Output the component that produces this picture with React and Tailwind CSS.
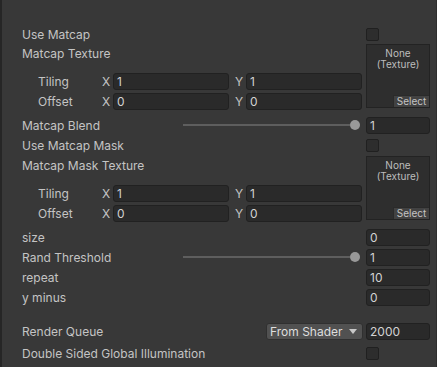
import React from "react";

const font = { fontFamily: "Inter, 'Noto Sans', 'Liberation Sans', sans-serif" };

function Field({ value, w = "w-[64px]" }) {
  return (
    <div className={`${w} h-[17px] shrink-0 rounded-[3px] border border-[#212121] bg-[#2a2a2a] flex items-center pl-[3px] pt-[1px] text-[12px] text-[#d2d2d2] leading-none`}>
      {value}
    </div>
  );
}

function Checkbox() {
  return <div className="w-[13px] h-[13px] rounded-[2px] border border-[#202020] bg-[#2d2d2d]" />;
}

function RightBox({ children }) {
  return <div className="w-[64px] shrink-0 flex items-center">{children}</div>;
}

function Row({ label, children, className = "" }) {
  return (
    <div className={`h-[18px] flex items-center ${className}`}>
      <div className="flex-1 pt-[2px] text-[12px] text-[#c4c4c4] leading-none whitespace-nowrap">{label}</div>
      {children}
    </div>
  );
}

function VecRow({ label, x, y, className = "" }) {
  return (
    <div className={`h-[18px] flex items-center ${className}`}>
      <div className="w-[80px] pl-[16px] pt-[1px] text-[12px] text-[#c4c4c4] leading-none">{label}</div>
      <div className="w-[11px] pt-[1px] text-[12px] text-[#c4c4c4] leading-none">X</div>
      <Field value={x} w="w-[116px]" />
      <div className="w-[6px]" />
      <div className="w-[11px] pt-[1px] text-[12px] text-[#c4c4c4] leading-none">Y</div>
      <Field value={y} w="w-[116px]" />
    </div>
  );
}

function TextureBlock({ label, className = "" }) {
  return (
    <div className={`flex ${className}`}>
      <div className="flex-1 flex flex-col">
        <div className="h-[18px] flex items-center pt-[2px] text-[12px] text-[#c4c4c4] leading-none">{label}</div>
        <VecRow label="Tiling" x="1" y="1" className="mt-[10px]" />
        <VecRow label="Offset" x="0" y="0" className="mt-[2px]" />
      </div>
      <div className="w-[4px]" />
      <div className="w-[64px] h-[64px] shrink-0 border border-[#232323] bg-[#2e2e2e] flex flex-col">
        <div className="flex-1 flex flex-col items-center pt-[3px] text-[10px] leading-[11px] text-[#bdbdbd]">
          <span>None</span>
          <span>(Texture)</span>
        </div>
        <div className="flex justify-end">
          <div className="w-[36px] h-[12px] bg-[#424242] border-t border-l border-[#2a2a2a] text-[10px] leading-[11px] text-[#c4c4c4] text-center">
            Select
          </div>
        </div>
      </div>
    </div>
  );
}

function SliderRow({ label, value, className = "" }) {
  return (
    <div className={`h-[18px] flex items-center ${className}`}>
      <div className="w-[161px] shrink-0 pt-[2px] text-[12px] text-[#c4c4c4] leading-none whitespace-nowrap">{label}</div>
      <div className="flex-1 flex items-center">
        <div className="flex-1 h-[2px] bg-[#5e5e5e]" />
        <div className="w-[10px] h-[10px] rounded-full bg-[#999999]" />
      </div>
      <div className="w-[6px]" />
      <Field value={value} />
    </div>
  );
}

export default function App() {
  return (
    <div
      style={font}
      className="w-[437px] h-[367px] bg-[#383838] border-l-[2px] border-[#262626] border-r border-r-[#2e2e2e] overflow-hidden"
    >
      <div className="pl-[20px] pr-[6px] pt-[25px] flex flex-col">
        <Row label="Use Matcap">
          <RightBox><Checkbox /></RightBox>
        </Row>
        <TextureBlock label="Matcap Texture" className="mt-[1px]" />
        <SliderRow label="Matcap Blend" value="1" className="mt-[6px]" />
        <Row label="Use Matcap Mask" className="mt-[2px]">
          <RightBox><Checkbox /></RightBox>
        </Row>
        <TextureBlock label="Matcap Mask Texture" className="mt-[2px]" />
        <Row label="size" className="mt-[6px]">
          <Field value="0" />
        </Row>
        <SliderRow label="Rand Threshold" value="1" className="mt-[2px]" />
        <Row label="repeat" className="mt-[2px]">
          <Field value="10" />
        </Row>
        <Row label="y minus" className="mt-[2px]">
          <Field value="0" />
        </Row>
        <Row label="Render Queue" className="mt-[16px]">
          <div className="w-[97px] h-[17px] rounded-[3px] bg-[#515151] border border-[#303030] flex items-center justify-between pl-[3px] pr-[5px] text-[12px] text-[#dedede] leading-none">
            <span className="pt-[1px]">From Shader</span>
            <svg width="8" height="5" viewBox="0 0 8 5"><path d="M0 0 L8 0 L4 5 Z" fill="#c8c8c8" /></svg>
          </div>
          <div className="w-[3px]" />
          <Field value="2000" />
        </Row>
        <Row label="Double Sided Global Illumination" className="mt-[4px]">
          <RightBox><Checkbox /></RightBox>
        </Row>
      </div>
    </div>
  );
}
